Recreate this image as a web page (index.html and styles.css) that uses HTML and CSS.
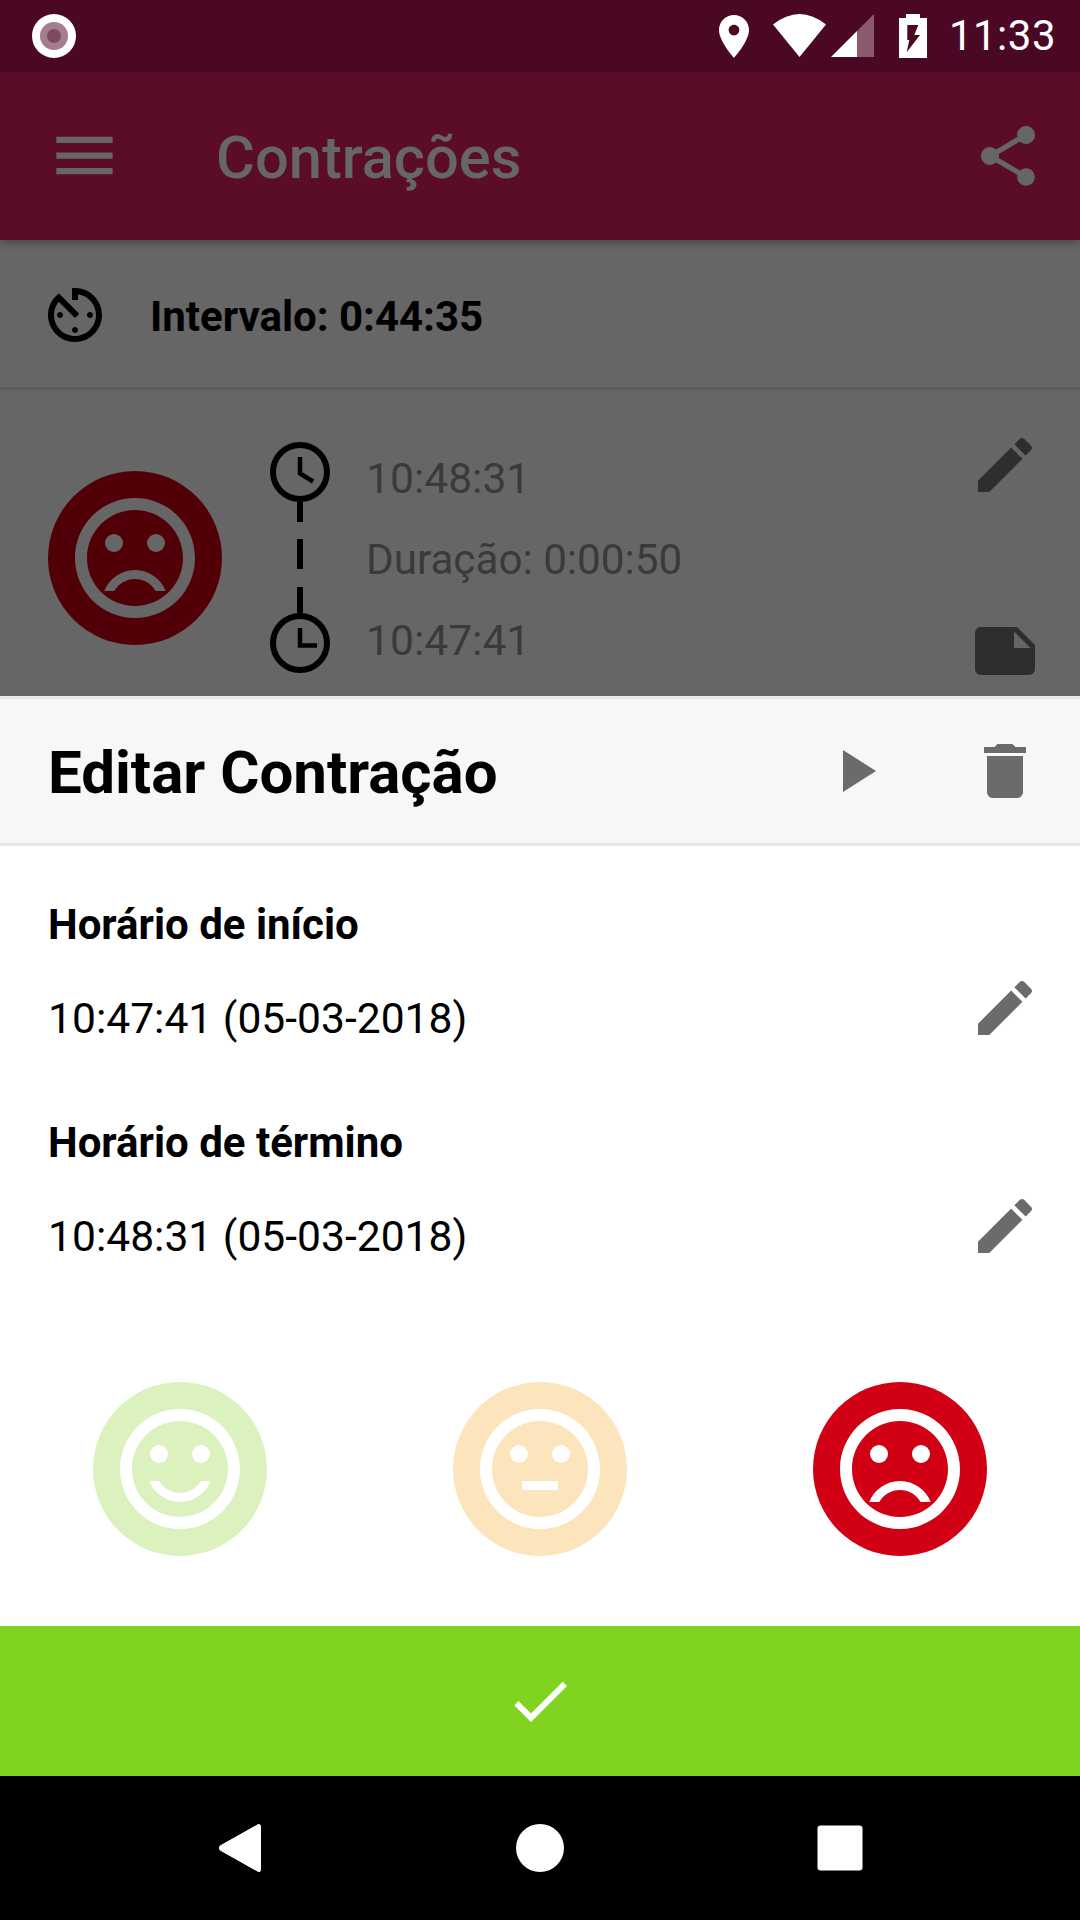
FILE: index.html
```html
<!DOCTYPE html>
<html lang="pt">
  <head>
    <meta charset="UTF-8" />
    <meta name="viewport" content="width=device-width, initial-scale=1.0" />
    <title>Contrações</title>
    <link rel="stylesheet" href="styles.css">
  </head>
  <body>
    <div class="screen">
      <!-- status bar -->
      <div class="status-bar">
        <svg class="rec-icon" viewBox="0 0 44 44"><circle cx="22" cy="22" r="22" fill="#fff"/><circle cx="22" cy="22" r="14" fill="#a47d8e"/><circle cx="22" cy="22" r="7" fill="#7f4a60"/></svg>
        <div class="status-right">
          <svg class="st-place" viewBox="5 2 14 20"><path fill="#fff" d="M12 2C8.13 2 5 5.13 5 9c0 5.25 7 13 7 13s7-7.75 7-13c0-3.87-3.13-7-7-7zm0 9.5c-1.38 0-2.5-1.12-2.5-2.5s1.12-2.5 2.5-2.5 2.5 1.12 2.5 2.5-1.12 2.5-2.5 2.5z"/></svg>
          <svg class="st-wifi" viewBox="0 0 53 43"><path fill="#fff" d="M0 10.5Q26.5-10.500 53 10.500L26.500 43z"/></svg>
          <svg class="st-signal" viewBox="0 0 43 43"><path fill="#8b5a6d" d="M26 17 43 0v43H26z"/><path fill="#fff" d="M0 43 26 17v26z"/></svg>
          <svg class="st-battery" viewBox="0 0 28 44"><path fill="#fff" fill-rule="evenodd" d="M7 0h14v4h7v40H0V4h7zM8.300 11L19.300 11 15.300 21H21L7.700 38.300 10.300 26H8.300z"/></svg>
          <span class="status-time">11:33</span>
        </div>
      </div>

      <!-- app bar -->
      <header class="app-bar">
        <svg class="menu-icon" viewBox="0 0 24 24"><path fill="#666" d="M3 18h18v-2H3v2zm0-5h18v-2H3v2zm0-7v2h18V6H3z"/></svg>
        <h1 class="app-title">Contrações</h1>
        <svg class="icon-72 push-right" viewBox="0 0 24 24"><path fill="#666" d="M18 16.080c-.76 0-1.440.3-1.960.77L8.910 12.700c.05-.23.09-.46.09-.7s-.04-.47-.09-.7l7.050-4.110c.54.5 1.250.81 2.040.81 1.660 0 3-1.340 3-3s-1.340-3-3-3-3 1.340-3 3c0 .24.04.47.09.7L8.040 9.810C7.500 9.310 6.790 9 6 9c-1.660 0-3 1.340-3 3s1.340 3 3 3c.79 0 1.500-.31 2.040-.81l7.120 4.160c-.05.21-.08.43-.08.65 0 1.610 1.310 2.920 2.920 2.920 1.610 0 2.920-1.310 2.920-2.920s-1.310-2.920-2.920-2.920z"/></svg>
      </header>

      <!-- interval row -->
      <div class="interval-row">
        <svg class="icon-72" viewBox="0 0 24 24"><path fill="#000" d="M11 17c0 .55.45 1 1 1s1-.45 1-1-.45-1-1-1-1 .45-1 1zm0-14v4h2V5.080c3.390.49 6 3.390 6 6.920 0 3.870-3.130 7-7 7s-7-3.130-7-7c0-1.680.59-3.220 1.580-4.420L12 13l1.410-1.410-6.800-6.800v.02C4.420 6.450 3 9.050 3 12c0 4.970 4.030 9 9 9 4.970 0 9-4.030 9-9s-4.030-9-9-9h-1zm7 9c0-.55-.45-1-1-1s-1 .45-1 1 .45 1 1 1 1-.45 1-1zM6 12c0 .55.45 1 1 1s1-.45 1-1-.45-1-1-1-1 .45-1 1z"/></svg>
        <span class="interval-text">Intervalo: 0:44:35</span>
      </div>

      <!-- contraction card behind the sheet -->
      <div class="card">
        <div class="face face-card">
          <svg class="face-icon" viewBox="0 0 24 24"><g fill="#666"><circle cx="15.500" cy="9.500" r="1.500"/><circle cx="8.500" cy="9.500" r="1.500"/><path d="M12 2C6.470 2 2 6.480 2 12s4.470 10 10 10c5.530 0 10-4.480 10-10S17.530 2 12 2zm0 18c-4.420 0-8-3.580-8-8s3.580-8 8-8 8 3.580 8 8-3.580 8-8 8zm0-6c-2.330 0-4.320 1.450-5.120 3.500h1.670c.69-1.190 1.970-2 3.450-2s2.750.81 3.450 2h1.670c-.8-2.050-2.790-3.500-5.120-3.500z"/></g></svg>
        </div>
        <svg class="timeline" viewBox="0 0 66 240">
          <g fill="none" stroke="#000">
            <circle cx="33" cy="32" r="27" stroke-width="6"/>
            <path d="M33 17v16.500l13 8" stroke-width="4.500"/>
            <path d="M33 62v20M33 99v30M33 147v26" stroke-width="6"/>
            <circle cx="33" cy="203" r="27" stroke-width="6"/>
            <path d="M33 188v17.500h17" stroke-width="4.500"/>
          </g>
        </svg>
        <div class="card-times">
          <div>10:48:31</div>
          <div class="card-duration">Duração: 0:00:50</div>
          <div>10:47:41</div>
        </div>
        <div class="card-actions">
          <svg class="icon-72" viewBox="0 0 24 24"><path fill="#2e2e2e" d="M3 17.250V21h3.750L17.810 9.940l-3.750-3.750L3 17.250zM20.710 7.040c.39-.39.39-1.020 0-1.410l-2.340-2.340c-.39-.39-1.020-.39-1.410 0l-1.830 1.830 3.750 3.750 1.830-1.830z"/></svg>
          <svg class="icon-72" viewBox="0 0 24 24"><path fill="#2e2e2e" d="M22 10l-6-6H4c-1.100 0-2 .9-2 2v12.010c0 1.100.9 1.990 2 1.990l16-.01c1.100 0 2-.89 2-1.990v-8zm-7-4.500l5.500 5.500H15V5.500z"/></svg>
        </div>
      </div>

      <!-- edit sheet -->
      <section class="sheet">
        <div class="sheet-header">
          <h2 class="sheet-title">Editar Contração</h2>
          <svg class="icon-72 push-right" viewBox="0 0 24 24"><path fill="#6b6b6b" d="M8 5v14l11-7z"/></svg>
          <svg class="icon-72 trash" viewBox="0 0 24 24"><path fill="#6b6b6b" d="M6 19c0 1.100.9 2 2 2h8c1.100 0 2-.9 2-2V7H6v12zM19 4h-3.500l-1-1h-5l-1 1H5v2h14V4z"/></svg>
        </div>

        <div class="sheet-body">
          <div class="field">
            <div class="field-label">Horário de início</div>
            <div class="field-row">
              <span class="field-value">10:47:41 (05-03-2018)</span>
              <svg class="icon-72" viewBox="0 0 24 24"><path fill="#6b6b6b" d="M3 17.250V21h3.750L17.810 9.940l-3.750-3.750L3 17.250zM20.710 7.040c.39-.39.39-1.020 0-1.410l-2.340-2.340c-.39-.39-1.020-.39-1.410 0l-1.830 1.830 3.750 3.750 1.830-1.830z"/></svg>
            </div>
          </div>
          <div class="field">
            <div class="field-label">Horário de término</div>
            <div class="field-row">
              <span class="field-value">10:48:31 (05-03-2018)</span>
              <svg class="icon-72" viewBox="0 0 24 24"><path fill="#6b6b6b" d="M3 17.250V21h3.750L17.810 9.940l-3.750-3.750L3 17.250zM20.710 7.040c.39-.39.39-1.020 0-1.410l-2.340-2.340c-.39-.39-1.020-.39-1.410 0l-1.830 1.830 3.750 3.750 1.830-1.830z"/></svg>
            </div>
          </div>

          <div class="faces">
            <div class="face face-good">
              <svg class="face-icon" viewBox="0 0 24 24"><g fill="#fff"><circle cx="15.500" cy="9.500" r="1.500"/><circle cx="8.500" cy="9.500" r="1.500"/><path d="M12 2C6.470 2 2 6.480 2 12s4.470 10 10 10c5.530 0 10-4.480 10-10S17.530 2 12 2zm0 18c-4.420 0-8-3.580-8-8s3.580-8 8-8 8 3.580 8 8-3.580 8-8 8zm0-4c-1.480 0-2.750-.81-3.450-2H6.880c.8 2.050 2.790 3.500 5.120 3.500s4.320-1.450 5.120-3.500h-1.670c-.7 1.190-1.970 2-3.450 2z"/></g></svg>
            </div>
            <div class="face face-ok">
              <svg class="face-icon" viewBox="0 0 24 24"><g fill="#fff"><circle cx="15.500" cy="9.500" r="1.500"/><circle cx="8.500" cy="9.500" r="1.500"/><path d="M12 2C6.470 2 2 6.480 2 12s4.470 10 10 10c5.530 0 10-4.480 10-10S17.530 2 12 2zm0 18c-4.420 0-8-3.580-8-8s3.580-8 8-8 8 3.580 8 8-3.580 8-8 8zM9 14h6v1.500H9z"/></g></svg>
            </div>
            <div class="face face-bad">
              <svg class="face-icon" viewBox="0 0 24 24"><g fill="#fff"><circle cx="15.500" cy="9.500" r="1.500"/><circle cx="8.500" cy="9.500" r="1.500"/><path d="M12 2C6.470 2 2 6.480 2 12s4.470 10 10 10c5.530 0 10-4.480 10-10S17.530 2 12 2zm0 18c-4.420 0-8-3.580-8-8s3.580-8 8-8 8 3.580 8 8-3.580 8-8 8zm0-6c-2.330 0-4.320 1.450-5.120 3.500h1.670c.69-1.190 1.970-2 3.450-2s2.750.81 3.450 2h1.670c-.8-2.050-2.790-3.500-5.120-3.500z"/></g></svg>
            </div>
          </div>
        </div>

        <button type="button" class="confirm">
          <svg class="icon-72" viewBox="0 0 24 24"><path fill="#fff" d="M9 16.170L4.830 12l-1.420 1.410L9 19 21 7l-1.410-1.410z"/></svg>
        </button>
      </section>

      <!-- navigation bar -->
      <nav class="nav-bar">
        <svg class="nav-icon" viewBox="0 0 60 60"><path fill="#fff" d="M51 8.500v43c0 2.500-2.500 3.300-4 1.800L10 32.500c-1.500-1.300-1.500-3.700 0-5L47 6.700c1.500-1.500 4-.7 4 1.800z"/></svg>
        <svg class="nav-icon" viewBox="0 0 60 60"><circle cx="30" cy="30" r="24" fill="#fff"/></svg>
        <svg class="nav-icon" viewBox="0 0 60 60"><rect x="7.500" y="7.500" width="45" height="45" rx="3" fill="#fff"/></svg>
      </nav>
    </div>
  </body>
</html>
```

FILE: styles.css
```css
html, body {
  margin: 0;
  padding: 0;
}
body {
  font-family: Roboto, "Liberation Sans", sans-serif;
}
svg {
  display: block;
  flex: none;
}
.screen {
  width: 1080px;
  height: 1920px;
  display: flex;
  flex-direction: column;
  background-color: #666666;
  overflow: hidden;
}
.icon-72 {
  width: 72px;
  height: 72px;
}
.push-right {
  margin-left: auto;
}

/* status bar */
.status-bar {
  height: 72px;
  flex: none;
  display: flex;
  align-items: flex-start;
  padding: 14px 24px 0 32px;
  box-sizing: border-box;
  background-color: #4b0825;
}
.rec-icon {
  width: 44px;
  height: 44px;
}
.status-right {
  margin-left: auto;
  display: flex;
  align-items: flex-start;
}
.st-place {
  width: 30px;
  height: 43px;
  margin-right: 24px;
  margin-top: 1px;
}
.st-wifi {
  width: 53px;
  height: 43px;
  margin-right: 5px;
}
.st-signal {
  width: 43px;
  height: 43px;
  margin-right: 25px;
}
.st-battery {
  width: 28px;
  height: 44px;
  margin-right: 22px;
}
.status-time {
  color: #ffffff;
  font-size: 42px;
  line-height: 44px;
  letter-spacing: 0.5px;
}

/* app bar */
.app-bar {
  height: 168px;
  flex: none;
  display: flex;
  align-items: center;
  padding: 0 36px 0 47px;
  box-sizing: border-box;
  background-color: #5a0c28;
  box-shadow: 0 3px 8px rgba(0, 0, 0, 0.3);
  position: relative;
}
.menu-icon {
  width: 75px;
  height: 75px;
  margin-top: -2px;
}
.app-title {
  margin: 3px 0 0 94px;
  color: #666666;
  font-size: 59.6px;
  font-weight: 500;
}

/* interval row */
.interval-row {
  height: 150px;
  flex: none;
  display: flex;
  align-items: center;
  gap: 39px;
  padding: 3px 0 0 39px;
  box-sizing: border-box;
  border-bottom: 3px solid #5c5c5c;
}
.interval-text {
  margin-top: 2px;
  color: #000000;
  font-size: 42px;
  font-weight: 700;
}

/* card */
.card {
  height: 306px;
  flex: none;
  display: flex;
  align-items: flex-start;
  padding: 0 39px 0 48px;
  box-sizing: border-box;
}
.face {
  width: 174px;
  height: 174px;
  flex: none;
  border-radius: 50%;
  display: flex;
  align-items: center;
  justify-content: center;
}
.face-icon {
  width: 144px;
  height: 144px;
}
.face-card {
  margin-top: 81px;
  background-color: #520007;
}
.timeline {
  width: 66px;
  height: 240px;
  margin: 50px 0 0 45px;
}
.card-times {
  margin: 48px 0 0 33px;
  color: #3a3a3a;
  font-size: 42.6px;
  line-height: 81px;
}
.card-duration {
  font-size: 42.2px;
}
.card-actions {
  margin: 39px 0 0 auto;
  display: flex;
  flex-direction: column;
  gap: 114px;
}

/* edit sheet */
.sheet {
  flex: 1;
  display: flex;
  flex-direction: column;
  background-color: #ffffff;
}
.sheet-header {
  height: 150px;
  flex: none;
  display: flex;
  align-items: center;
  padding: 0 39px 0 48px;
  box-sizing: border-box;
  background-color: #f7f7f7;
  border-top: 3px solid #e8e8e8;
  border-bottom: 3px solid #e5e5e5;
}
.sheet-title {
  margin: 3px 0 0;
  color: #000000;
  font-size: 60px;
  font-weight: 700;
}
.trash {
  margin-left: 78px;
}
.sheet-body {
  flex: 1;
  padding-top: 48px;
}
.field {
  padding: 0 39px 0 48px;
  margin-bottom: 51px;
}
.field-label {
  color: #000000;
  font-size: 42px;
  font-weight: 700;
  line-height: 60px;
  margin-top: 1px;
  margin-bottom: 17px;
}
.field-row {
  display: flex;
  justify-content: space-between;
  align-items: flex-start;
  height: 90px;
}
.field-value {
  color: #000000;
  font-size: 42.6px;
  line-height: 92px;
}
.faces {
  display: grid;
  grid-template-columns: repeat(3, 1fr);
  justify-items: center;
  margin-top: 102px;
}
.face-good {
  background-color: #dbf2bf;
}
.face-ok {
  background-color: #fce4bc;
}
.face-bad {
  background-color: #d20015;
}
.confirm {
  height: 150px;
  flex: none;
  display: flex;
  align-items: center;
  justify-content: center;
  border: none;
  padding: 0;
  background-color: #80d41f;
}

/* navigation bar */
.nav-bar {
  height: 144px;
  flex: none;
  display: flex;
  align-items: center;
  justify-content: center;
  gap: 240px;
  background-color: #000000;
}
.nav-icon {
  width: 60px;
  height: 60px;
}
```
